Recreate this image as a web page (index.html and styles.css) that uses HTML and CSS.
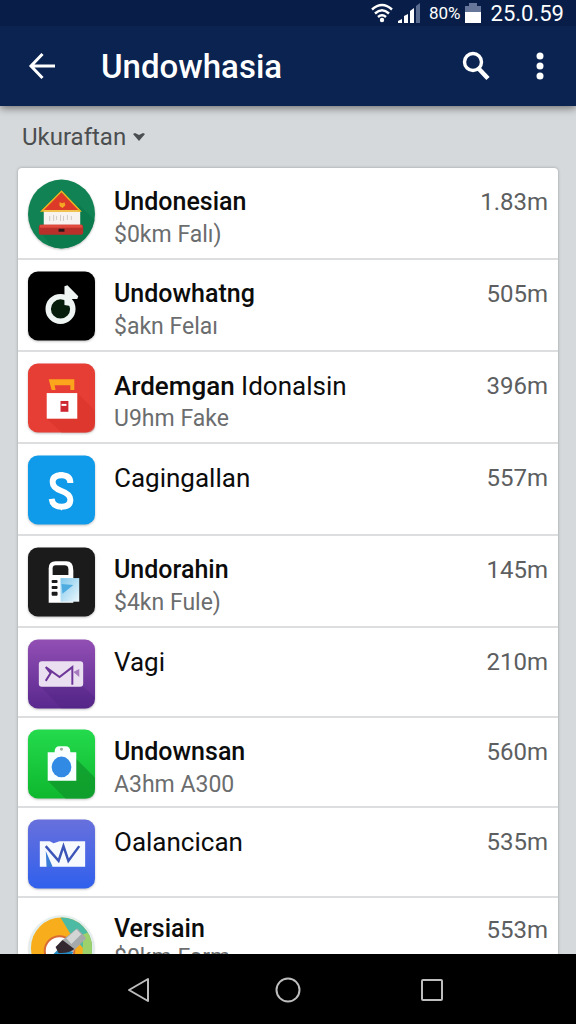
FILE: index.html
```html
<!DOCTYPE html>
<html lang="id">
<head>
<meta charset="utf-8">
<meta name="viewport" content="width=device-width, initial-scale=1">
<title>Undowhasia</title>
<link rel="stylesheet" href="styles.css">
</head>
<body>
<div class="screen">
  <header class="top">
    <div class="status">
      <svg width="22" height="20" viewBox="0 0 22 20" fill="none" stroke="#fff" stroke-width="2.4" aria-hidden="true"><path d="M1 6.500Q11-2.500 21 6.500M4 10.500Q11 4 18 10.500M7 14Q11 10.500 15 14"/><circle cx="11" cy="17" r="2.200" fill="#fff" stroke="none"/></svg>
      <svg width="24" height="20" viewBox="0 0 24 20" fill="#fff" aria-hidden="true"><path d="M1 20v-2l4-2v4zM7 13l4-2v9H7zM13 8l4-3v15h-4z"/><path d="M19 3l4-3v20h-4z" fill="#5a6b90"/></svg>
      <span class="battery-level">80%</span>
      <svg class="battery" width="16" height="20" viewBox="0 0 16 20" aria-hidden="true"><path d="M0 3h4V0h8v3h4v7H0z" fill="#66769a"/><path d="M0 9h16v11H0z" fill="#fff"/></svg>
      <span class="clock">25.0.59</span>
    </div>
    <div class="appbar">
      <button class="icon-button" type="button" aria-label="Back"><svg width="28" height="28" viewBox="0 0 28 28" fill="none" stroke="#fff" stroke-width="3"><path d="M27 14H3M14.500 2L3 14l11.500 12"/></svg></button>
      <h1 class="title">Undowhasia</h1>
      <button class="icon-button" type="button" aria-label="Search"><svg width="28" height="30" viewBox="0 0 28 30" fill="none" stroke="#fff"><circle cx="11" cy="11" r="8.500" stroke-width="3.400"/><path d="M17 18l9 9.500" stroke-width="4.500"/></svg></button>
      <button class="icon-button" type="button" aria-label="More options"><svg width="8" height="28" viewBox="0 0 8 28" fill="#fff"><circle cx="4" cy="4" r="3.500"/><circle cx="4" cy="14" r="3.500"/><circle cx="4" cy="24" r="3.500"/></svg></button>
    </div>
  </header>
  <main class="content">
    <label class="sort">
      <select class="sort-select" aria-label="Sort"><option>Ukuraftan</option></select>
      <svg width="12" height="8" viewBox="0 0 12 8" fill="#4b4e50" aria-hidden="true"><path d="M0 1l2-1 4 2 4-2 2 1-6 7z"/></svg>
    </label>
    <ul class="card">
      <li><a class="row" href="#">
        <svg class="app-icon" viewBox="0 0 68 72" aria-hidden="true"><defs><clipPath id="disc"><ellipse cx="34" cy="36" rx="34" ry="35"/></clipPath></defs><g clip-path="url(#disc)"><path d="M0 0h68v72H0z" fill="#118253"/><path d="M52 27l16 15v30H26l-12-16z" fill="#08774a" opacity=".6"/></g><path d="M16 32h37v16H16z" fill="#f6f3f1"/><path d="M34 14l19 18H14z" fill="#dc3928"/><path d="M14 33l20-20 19 20z" fill="none" stroke="#efb51e" stroke-width="1.500"/><path d="M32 24l3 1 2-1 1 3-3 3-3-2z" fill="#f5a623"/><path d="M22 38v5M26 37v6M29 38v4M33 37v6M36 38v5M40 37v5M44 38v4" stroke="#cfc9c8"/><path d="M11 49q0-2 2-2h41q2 0 2 2v6q0 2-2 2H13q-2 0-2-2z" fill="#b9302a"/><path d="M12 47h43v3H12z" fill="#e14a3c"/><path d="M31 51h6v3h-6z" fill="#291819"/></svg>
        <span class="text"><strong class="name">Undonesian</strong><span class="meta">$0km Falı)</span></span><span class="value">1.83m</span></a></li>
      <li><a class="row" href="#">
        <svg class="app-icon" viewBox="0 0 68 72" aria-hidden="true"><rect y="1" width="68" height="70" rx="10"/><circle cx="33" cy="39" r="12.500" fill="#061d0c" stroke="#eef5f3" stroke-width="5.500"/><path d="M37 35V16l3-1 11 11-1 3h-7v7z" fill="#eef5f3"/></svg>
        <span class="text"><strong class="name">Undowhatng</strong><span class="meta">$akn Felaı</span></span><span class="value">505m</span></a></li>
      <li><a class="row" href="#">
        <svg class="app-icon" viewBox="0 0 68 72" aria-hidden="true"><rect y="1" width="68" height="70" rx="10" fill="#e63d34"/><path d="M50 31l18 18v14q0 8-8 8H34L18 56z" fill="#d8342c" opacity=".6"/><path d="M21 17h26v11h-4v-5H27l1 5h-4z" fill="#fba51c"/><path d="M19 31h31v26H19z" fill="#fff"/><path d="M33 39h8v11h-8z" fill="#cf2731"/><path d="M34 42h5v2h-5z" fill="#fff"/></svg>
        <span class="text"><span class="name"><strong>Ardemgan</strong> Idonalsin</span><span class="meta">U9hm Fake</span></span><span class="value">396m</span></a></li>
      <li><a class="row" href="#">
        <svg class="app-icon" viewBox="0 0 68 72" aria-hidden="true"><rect y="1" width="68" height="70" rx="10" fill="#109bea"/><path d="M43 29q0-8-9-8t-9 7q0 6 9 9 9 3 9 9 0 7-9 7t-10-8" fill="none" stroke="#fff" stroke-width="6"/><path d="M31 18h5v4h-5zM31 52h5l-2 5z" fill="#fff"/></svg>
        <span class="text"><span class="name">Cagingallan</span></span><span class="value">557m</span></a></li>
      <li><a class="row" href="#">
        <svg class="app-icon" viewBox="0 0 68 72" aria-hidden="true"><defs><linearGradient id="pane" x2="1" y2="1"><stop stop-color="#7fc7ec"/><stop offset="1" stop-color="#edf8fc"/></linearGradient></defs><rect y="1" width="68" height="70" rx="10" fill="#1b1b1b"/><path d="M21 57V22q0-7 7-7h11q7 0 7 9v33z" fill="#fff"/><path d="M25 22q0-3 3-3h9q4 0 4 4v6H25z" fill="#1b1b1b"/><path d="M33 32h19v24H33z" fill="url(#pane)"/><path d="M34 38l12 1-11 9z" fill="#4eace1"/><g fill="#1b1b1b"><rect x="24" y="34" width="6" height="3" rx="1"/><rect x="24" y="40" width="6" height="3" rx="1"/><rect x="24" y="46" width="6" height="4" rx="1"/></g></svg>
        <span class="text"><strong class="name">Undorahin</strong><span class="meta">$4kn Fule)</span></span><span class="value">145m</span></a></li>
      <li><a class="row short" href="#">
        <svg class="app-icon" viewBox="0 0 68 72" aria-hidden="true"><defs><linearGradient id="violet" x2="0" y2="1"><stop stop-color="#924fb4"/><stop offset="1" stop-color="#59288e"/></linearGradient></defs><rect y="1" width="68" height="70" rx="10" fill="url(#violet)"/><path d="M12 48h43l13 12q-1 11-8 11H34z" fill="#4d207f" opacity=".3"/><rect x="11" y="23" width="45" height="26" rx="3" fill="#eadff1"/><path d="M18 43l5-8-5-6 14 10 13-10v18" fill="none" stroke="#6e3598" stroke-width="2"/><path d="M46 34l6-3v8z" fill="#a77abf"/></svg>
        <span class="text"><span class="name">Vagi</span></span><span class="value">210m</span></a></li>
      <li><a class="row short" href="#">
        <svg class="app-icon" viewBox="0 0 68 72" aria-hidden="true"><defs><linearGradient id="green" x2="0" y2="1"><stop stop-color="#24da4d"/><stop offset="1" stop-color="#0eb82e"/></linearGradient></defs><rect y="1" width="68" height="70" rx="10" fill="url(#green)"/><path d="M49 31l19 19v11q0 10-9 10H38L20 53z" fill="#10942b" opacity=".7"/><path d="M20 24h7q0-6 5-6h6q5 0 5 6h6v29H20z" fill="#f7ffff"/><ellipse cx="34" cy="39" rx="10" ry="10.500" fill="#318be4"/><circle cx="34" cy="21" r="1.500" fill="#9cae9f"/></svg>
        <span class="text"><strong class="name">Undownsan</strong><span class="meta">A3hm A300</span></span><span class="value">560m</span></a></li>
      <li><a class="row short" href="#">
        <svg class="app-icon" viewBox="0 0 68 72" aria-hidden="true"><defs><linearGradient id="blue" x2="0" y2="1"><stop stop-color="#6870dc"/><stop offset="1" stop-color="#3060ed"/></linearGradient></defs><rect y="1" width="68" height="70" rx="10" fill="url(#blue)"/><path d="M12 23h10l4 2 6-2h26v26H24l-5-12v12h-7z" fill="#f6faff"/><path d="M18 28l13 15 5-15 5 15 11-15" fill="none" stroke="#3c55b8" stroke-width="2.500"/><path d="M18 33l7 16h-6z" fill="#397cd6"/></svg>
        <span class="text"><span class="name">Oalancican</span></span><span class="value">535m</span></a></li>
      <li><a class="row compact" href="#">
        <svg class="app-icon" viewBox="0 0 68 72" aria-hidden="true"><defs><clipPath id="ring"><circle cx="34" cy="36" r="31"/></clipPath></defs><circle cx="34" cy="36" r="33" fill="#e1f0ee"/><g clip-path="url(#ring)"><path d="M0 0h68v72H0z" fill="#f7ad1c"/><path d="M30 0l12 20 26 30V0z" fill="#4dbba3"/><path d="M56 22l12-4v40H55z" fill="#9cd16b"/></g><circle cx="32" cy="39" r="15" fill="#fff" stroke="#d86b36" stroke-width="2"/><path d="M18 50l15-15 13 5-9 18H18z" fill="#258cc5"/><path d="M35 28L50 16l9 10-14 14z" fill="#a6a9aa"/><path d="M39 26l10-9 5 5-10 10z" fill="#d3d5d5"/><path d="M28 35l7-7 12 9q-6 5-16 4z" fill="#33272f"/></svg>
        <span class="text"><strong class="name">Versiain</strong><span class="meta">$0km Farm</span></span><span class="value">553m</span></a></li>
    </ul>
  </main>
  <nav class="navbar" aria-label="System">
    <button class="nav-button" type="button" aria-label="Back"><svg width="36" height="28" viewBox="0 0 36 28"><path d="M22 3v22L3 14z"/></svg></button>
    <button class="nav-button" type="button" aria-label="Home"><svg width="28" height="28" viewBox="0 0 28 28"><circle cx="14" cy="14" r="11.500"/></svg></button>
    <button class="nav-button" type="button" aria-label="Recent apps"><svg width="24" height="28" viewBox="0 0 24 28"><rect x="2" y="4" width="20" height="20" rx="1"/></svg></button>
  </nav>
</div>
</body>
</html>
```
FILE: styles.css
```css
* {
  box-sizing: border-box;
}

body {
  margin: 0;
  font-family: Roboto, "Liberation Sans", sans-serif;
}

button {
  border: 0;
  padding: 0;
  background: none;
}

.screen {
  display: flex;
  flex-direction: column;
  height: 100vh;
  overflow: hidden;
  background: #d6d9db;
}

.top {
  flex: none;
  background: #0a2350;
  color: #fff;
  box-shadow: 0 2px 8px rgba(0, 0, 0, 0.5);
}

.status {
  display: flex;
  align-items: center;
  justify-content: flex-end;
  gap: 4px;
  height: 26px;
  padding-right: 12px;
  background: #081e48;
}

.battery-level {
  margin-left: 4px;
  font-size: 17px;
}

.clock {
  margin-left: 6px;
  font-size: 22px;
}

.appbar {
  display: flex;
  align-items: center;
  height: 80px;
  padding: 0 4px 0 10px;
}

.icon-button {
  display: flex;
  align-items: center;
  justify-content: center;
  width: 64px;
  height: 64px;
}

.title {
  flex: 1;
  margin: 0;
  padding-left: 27px;
  font-size: 33px;
  font-weight: 500;
}

.content {
  flex: 1;
  min-height: 0;
  overflow: hidden;
  padding: 0 18px;
}

.sort {
  display: flex;
  align-items: center;
  gap: 6px;
  height: 62px;
  padding-left: 4px;
}

.sort-select {
  appearance: none;
  border: 0;
  padding: 0;
  background: none;
  color: #4b4e50;
  font-family: inherit;
  font-size: 24px;
}

.card {
  margin: 0;
  padding: 0;
  list-style: none;
  background: #fff;
  border-radius: 4px 4px 0 0;
  box-shadow: 0 0 3px rgba(0, 0, 0, 0.3);
}

.row {
  display: flex;
  gap: 19px;
  height: 92px;
  padding: 10px 10px 8px;
  border-bottom: 2px solid #dcdedf;
  color: #0c0c0c;
  text-decoration: none;
}

.row.short {
  height: 90px;
}

.app-icon {
  flex: none;
  width: 67px;
  height: 72px;
  filter: drop-shadow(0 1px 1px rgba(0, 0, 0, 0.25));
}

.text {
  display: flex;
  flex: 1;
  flex-direction: column;
  padding-top: 7px;
}

.name {
  font-size: 26px;
  line-height: 34px;
  font-weight: 400;
}

strong {
  font-weight: 500;
}

strong.name {
  font-size: 25px;
  font-weight: 500;
}

.meta {
  color: #6b6d6e;
  font-size: 23px;
  line-height: 32px;
}

.value {
  padding-top: 8px;
  color: #5c5e5f;
  font-size: 24px;
  line-height: 32px;
}

.compact .app-icon {
  margin-top: 4px;
}

.compact .text {
  padding-top: 4px;
}

.compact .meta {
  line-height: 24px;
}

.compact .value {
  padding-top: 6px;
}

.navbar {
  display: flex;
  flex: none;
  align-items: center;
  justify-content: center;
  height: 70px;
  padding-top: 5px;
  background: #000;
}

.nav-button {
  width: 25%;
  height: 56px;
}

.nav-button svg {
  fill: none;
  stroke: #bdbdbd;
  stroke-width: 2;
  stroke-linejoin: round;
}
```
